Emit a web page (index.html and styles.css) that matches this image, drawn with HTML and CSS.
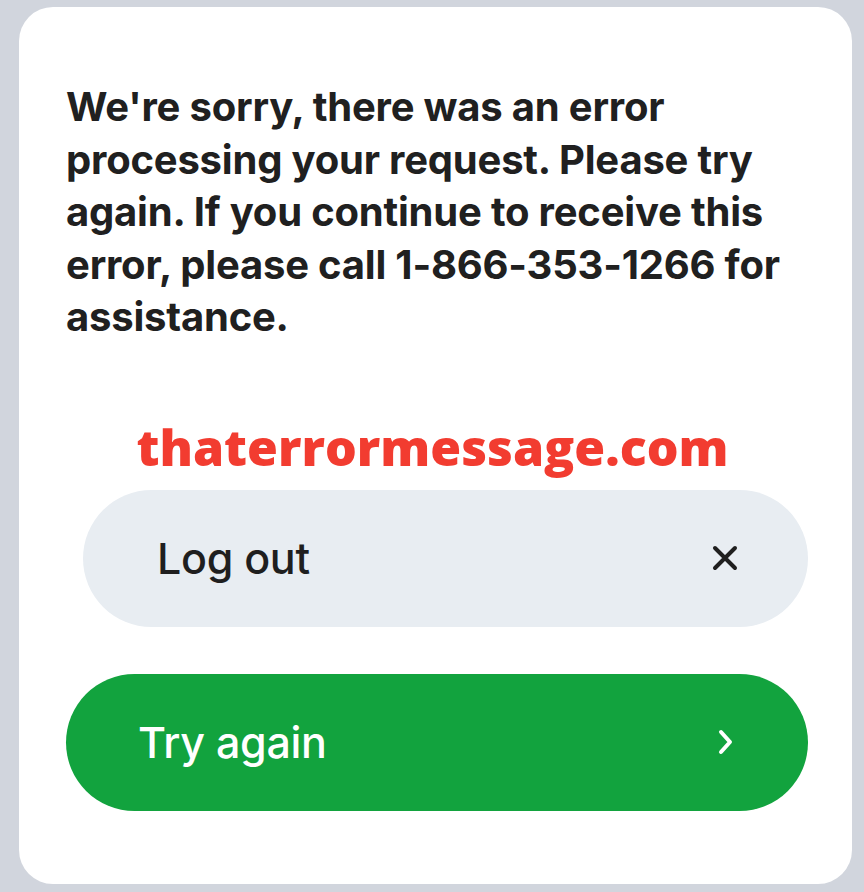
FILE: index.html
```html
<!DOCTYPE html>
<html lang="en">
<head>
<meta charset="utf-8">
<title>Error</title>
<link rel="stylesheet" href="styles.css">
</head>
<body>
<main class="card">
  <p class="message">We're sorry, there was an error processing your request. Please try again. If you continue to receive this error, please call 1-866-353-1266 for assistance.</p>
  <div class="watermark">thaterrormessage.com</div>
  <button class="btn btn-logout" type="button">
    <span class="btn-label">Log out</span>
    <svg class="icon" width="26" height="26" viewBox="0 0 26 26" aria-hidden="true">
      <path d="M3 3 L23 23 M23 3 L3 23" stroke="#1f1f1f" stroke-width="4" stroke-linecap="round" fill="none"/>
    </svg>
  </button>
  <button class="btn btn-retry" type="button">
    <span class="btn-label">Try again</span>
    <svg class="icon" width="20" height="26" viewBox="0 0 20 26" aria-hidden="true">
      <path d="M5 3 L14 13 L5 23" stroke="#ffffff" stroke-width="4" stroke-linecap="round" stroke-linejoin="round" fill="none"/>
    </svg>
  </button>
</main>
</body>
</html>
```

FILE: styles.css
```css
html, body {
  margin: 0;
  padding: 0;
}
body {
  background: #d1d5dd;
  width: 864px;
  height: 892px;
  overflow: hidden;
  font-family: Inter, "Liberation Sans", sans-serif;
}
.card {
  box-sizing: border-box;
  margin: 7px 12px 0 19px;
  width: 833px;
  height: 877px;
  background: #ffffff;
  border-radius: 34px;
  padding: 74px 44px 0 47px;
  display: flex;
  flex-direction: column;
}
.message {
  margin: 0;
  font-size: 40px;
  font-weight: 700;
  line-height: 52.5px;
  color: #202020;
  letter-spacing: -0.2px;
}
.watermark {
  margin-top: 72px;
  align-self: center;
  font-family: "Open Sans", sans-serif;
  font-weight: 800;
  font-size: 50px;
  line-height: 62px;
  color: #f23c30;
  margin-right: 9px;
}
.btn {
  box-sizing: border-box;
  height: 137px;
  border: none;
  border-radius: 69px;
  display: flex;
  align-items: center;
  justify-content: space-between;
  font-family: Inter, "Liberation Sans", sans-serif;
  font-weight: 500;
  font-size: 43px;
  letter-spacing: -0.3px;
  cursor: pointer;
}
.btn-logout {
  margin-top: 12px;
  margin-left: 17px;
  background: #e8edf2;
  color: #1f1f1f;
  padding: 0 70px 0 74px;
}
.btn-retry {
  margin-top: 47px;
  background: #12a33e;
  color: #ffffff;
  padding: 0 72px 0 72px;
}
.btn-label {
  display: block;
}
.icon {
  display: block;
}
```
